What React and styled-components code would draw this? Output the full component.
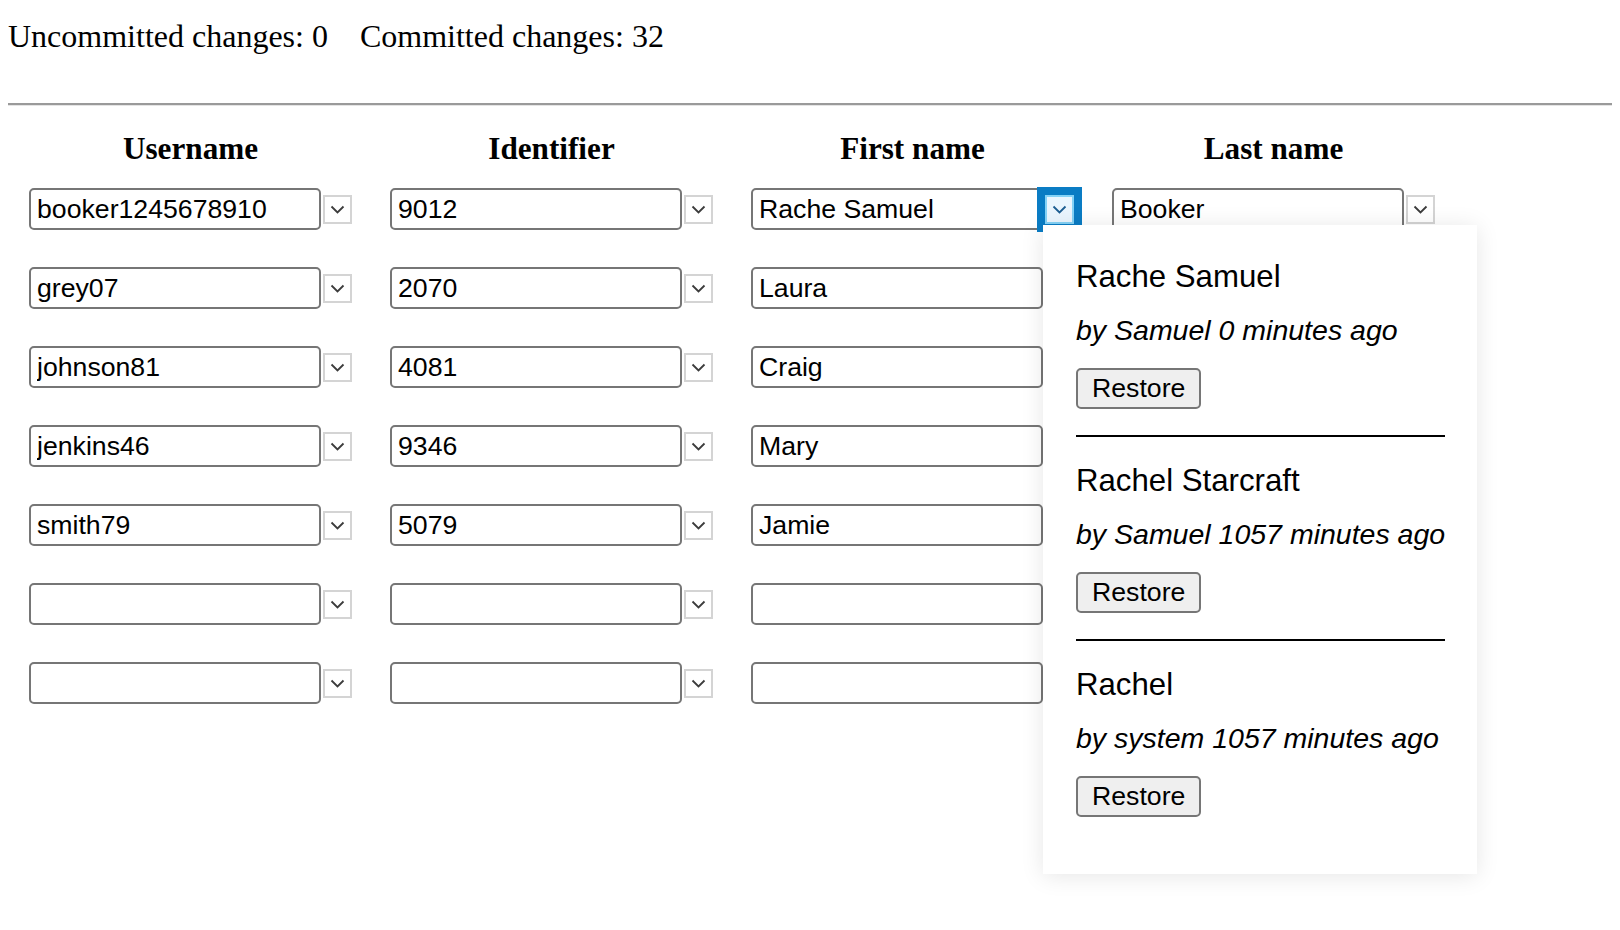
import React from "react";
import styled, { createGlobalStyle } from "styled-components";

const GlobalStyle = createGlobalStyle`
  html, body {
    background: #ffffff;
  }
  body {
    margin: 8px;
    font-family: "Liberation Serif", "Times New Roman", serif;
    color: #000;
  }
`;

const Page = styled.div`
  min-height: 914px;
`;

const Status = styled.div`
  padding-top: 10px;
  margin-bottom: 48px;
  font-size: 32px;
  line-height: 37px;
  white-space: nowrap;
`;

const Count = styled.span`
  margin-right: 32px;
`;

const Rule = styled.div`
  width: calc(100vw - 8px);
  border-top: 2px solid #9a9a9a;
  border-bottom: 1px solid #e4e4e4;
`;

const Columns = styled.div`
  display: grid;
  grid-template-columns: repeat(4, 323px);
  column-gap: 38px;
  margin-left: 21px;
`;

const HeaderRow = styled(Columns)`
  margin-top: 25px;
  margin-bottom: 21px;
`;

const Body = styled(Columns)`
  row-gap: 37px;
`;

const Heading = styled.div`
  text-align: center;
  font-weight: bold;
  font-size: 31.2px;
  line-height: 36px;
`;

const Cell = styled.div`
  position: relative;
  display: flex;
  align-items: center;
  gap: 2px;
  height: 42px;
`;

const Field = styled.input`
  box-sizing: border-box;
  width: 292px;
  height: 42px;
  margin: 0;
  padding: 0 6px;
  border: 2px solid #767676;
  border-radius: 5px;
  font-family: "Liberation Sans", Arial, sans-serif;
  font-size: 26.67px;
  color: #000;
  background: #fff;
`;

const Toggle = styled.button`
  box-sizing: border-box;
  width: 29px;
  height: 29px;
  margin: 0;
  padding: 0;
  display: flex;
  align-items: center;
  justify-content: center;
  border: 2px solid ${(p) => (p.$active ? "#84d2f6" : "#d4d4d4")};
  border-radius: 0;
  background: ${(p) => (p.$active ? "#eaf5fe" : "#ffffff")};
  outline: ${(p) => (p.$active ? "8px solid #0a7cc4" : "none")};
  color: ${(p) => (p.$active ? "#1c5d92" : "#3c3c3c")};
`;

const Popup = styled.div`
  position: absolute;
  top: 37px;
  left: 292px;
  z-index: 10;
  box-sizing: border-box;
  width: 434px;
  padding: 34px 32px 57px 33px;
  background: #ffffff;
  box-shadow: 0 2px 22px rgba(0, 0, 0, 0.1);
  font-family: "Liberation Sans", Arial, sans-serif;
  color: #000;
`;

const Entry = styled.div`
  display: flex;
  flex-direction: column;
  align-items: flex-start;
`;

const EntryTitle = styled.div`
  font-size: 31.2px;
  line-height: 35px;
`;

const EntryMeta = styled.div`
  margin-top: 20px;
  font-size: 28.5px;
  line-height: 32px;
  font-style: italic;
  white-space: nowrap;
`;

const RestoreButton = styled.button`
  margin-top: 22px;
  height: 41px;
  padding: 0 14px;
  border: 2px solid #767676;
  border-radius: 5px;
  background: #efefef;
  font-family: "Liberation Sans", Arial, sans-serif;
  font-size: 26.67px;
  color: #000;
`;

const Divider = styled.div`
  height: 2px;
  margin: 26px 0;
  background: #000;
`;

const Chevron = () => (
  <svg width="15" height="9" viewBox="0 0 15 9">
    <polyline points="1.5,1.5 7.5,7.5 13.5,1.5" fill="none" stroke="currentColor" strokeWidth="1.8" />
  </svg>
);

const headings = ["Username", "Identifier", "First name", "Last name"];

const rows = [
  ["booker1245678910", "9012", "Rache Samuel", "Booker"],
  ["grey07", "2070", "Laura", "Grey"],
  ["johnson81", "4081", "Craig", "Johnson"],
  ["jenkins46", "9346", "Mary", "Jenkins"],
  ["smith79", "5079", "Jamie", "Smith"],
  ["", "", "", ""],
  ["", "", "", ""],
];

const history = [
  { value: "Rache Samuel", meta: "by Samuel 0 minutes ago" },
  { value: "Rachel Starcraft", meta: "by Samuel 1057 minutes ago" },
  { value: "Rachel", meta: "by system 1057 minutes ago" },
];

const HistoryMenu = () => (
  <Popup>
    {history.map((h, i) => (
      <React.Fragment key={h.value}>
        {i > 0 && <Divider />}
        <Entry>
          <EntryTitle>{h.value}</EntryTitle>
          <EntryMeta>{h.meta}</EntryMeta>
          <RestoreButton>Restore</RestoreButton>
        </Entry>
      </React.Fragment>
    ))}
  </Popup>
);

const App = () => {
  return (
    <Page>
      <GlobalStyle />
      <Status>
        <Count>Uncommitted changes: 0</Count>
        <span>Committed changes: 32</span>
      </Status>
      <Rule />
      <HeaderRow>
        {headings.map((h) => (
          <Heading key={h}>{h}</Heading>
        ))}
      </HeaderRow>
      <Body>
        {rows.map((row, r) =>
          row.map((value, c) => {
            const hasToggle = c < 2 || r === 0 || c === 3;
            const active = r === 0 && c === 2;
            return (
              <Cell key={`${r}-${c}`}>
                <Field defaultValue={value} />
                {hasToggle && (
                  <Toggle $active={active}>
                    <Chevron />
                  </Toggle>
                )}
                {active && <HistoryMenu />}
              </Cell>
            );
          })
        )}
      </Body>
    </Page>
  );
};

export default App;
